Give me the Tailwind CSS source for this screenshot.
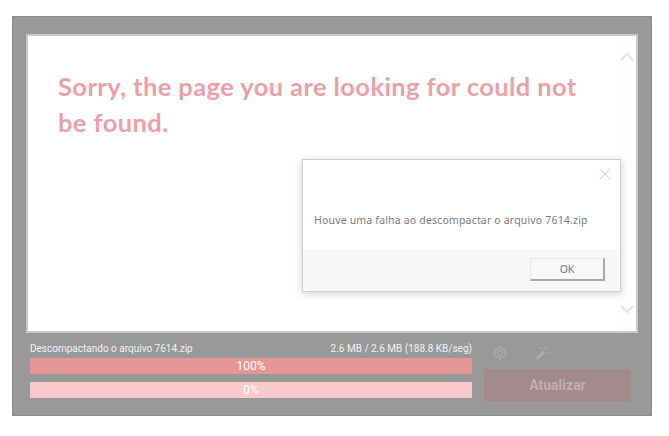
<!DOCTYPE html>
<html lang="en">
<head>
  <meta charset="UTF-8">
  <meta name="viewport" content="width=device-width, initial-scale=1.0">
  <title>Atualizador</title>
  <script src="https://cdn.jsdelivr.net/npm/@tailwindcss/browser@4"></script>
</head>
<body class="bg-white font-['Roboto',sans-serif] overflow-hidden">
  <div class="ml-3 mt-4 w-[640px] h-[400px] bg-[#999999] border border-[#8a8a8a] pl-[13px] pt-[17px] relative">
    <!-- content panel -->
    <div class="w-[612px] h-[299px] bg-white border-2 border-[#c9c9c9] flex">
      <div class="flex-1 pl-[30px] pt-[32px]">
        <h1 class="max-w-[530px] font-['Lato',sans-serif] font-bold text-[25.5px] leading-[36px] text-[#ed9fa8] tracking-[0.4px]">Sorry, the page you are looking for could not be found.</h1>
      </div>
      <div class="w-[18px] flex flex-col justify-between items-center pt-[16px] pb-[17px] pr-[1px] bg-[#fdfdfd]">
        <svg width="14" height="9" viewBox="0 0 14 9" fill="none" stroke="#e4e4e4" stroke-width="2"><path d="M1 8l6-6 6 6"/></svg>
        <svg width="14" height="9" viewBox="0 0 14 9" fill="none" stroke="#e4e4e4" stroke-width="2"><path d="M1 1l6 6 6-6"/></svg>
      </div>
    </div>

    <!-- bottom area -->
    <div class="flex mt-[8px] pl-[4px]">
      <div class="w-[442px]">
        <div class="flex justify-between text-[10px] leading-[14px] pt-[1px] text-[#f2f2f2] h-[17px]">
          <span>Descompactando o arquivo 7614.zip</span>
          <span>2.6 MB / 2.6 MB (188.8 KB/seg)</span>
        </div>
        <div class="h-4 bg-[#e79696] text-white text-[12px] leading-4 text-center">100%</div>
        <div class="h-4 mt-2 bg-[#f9caca] text-white text-[12px] leading-4 text-center">0%</div>
      </div>
      <div class="ml-3 w-[147px] flex flex-col">
        <div class="flex h-[24px] items-center pl-[8px] gap-[26px]">
          <svg width="16" height="16" viewBox="0 0 24 24" fill="none" stroke="#a8a8a8" stroke-width="2.2"><circle cx="12" cy="12" r="3.5"/><path d="M12 1v4M12 19v4M1 12h4M19 12h4M4.500 4.500l2.500 2.500M17 17l2.500 2.500M4.500 19.500l2.500-2.500M17 7l2.500-2.500"/><circle cx="12" cy="12" r="7.500"/></svg>
          <svg width="16" height="16" viewBox="0 0 24 24" fill="none" stroke="#adadad"><path d="M4 21L15 10" stroke-width="4.5"/><path d="M18 3v4M16 5h4M21 10v3M19.500 11.500h3M11 3v3M9.500 4.500h3" stroke-width="1.5"/></svg>
        </div>
        <div class="mt-[4px] h-8 bg-[#a38a8c] text-[#bdb0b1] font-bold text-[14px] leading-8 text-center">Atualizar</div>
      </div>
    </div>

    <!-- dialog over the panel -->
    <div class="absolute left-[289px] top-[142px] w-[319px] h-[133px] bg-white border border-[#cfcfcf] shadow-[0_2px_8px_rgba(0,0,0,0.18)] flex flex-col">
      <div class="flex-1 relative">
        <svg class="absolute right-[9px] top-[8px]" width="12" height="12" viewBox="0 0 12 12" stroke="#cccccc" fill="none"><path d="M.5.5l11 11M11.500.5l-11 11"/></svg>
        <p class="pl-[11px] pt-[52px] font-['Noto_Sans',sans-serif] text-[10.500px] leading-[16px] text-[#7a7a7a] tracking-[0.18px]">Houve uma falha ao descompactar o arquivo 7614.zip</p>
      </div>
      <div class="h-[42px] bg-[#f7f7f7] flex justify-end items-start pt-[9px] pr-[15px]">
        <div class="w-[75px] h-[23px] bg-[#f8f8f8] border border-[#e6e6e6] border-r-[#a9a9a9] border-b-[#a9a9a9] border-r-2 border-b-2 font-['Noto_Sans',sans-serif] text-[10.500px] leading-[20px] text-[#7a7a7a] text-center">OK</div>
      </div>
    </div>
  </div>
</body>
</html>
